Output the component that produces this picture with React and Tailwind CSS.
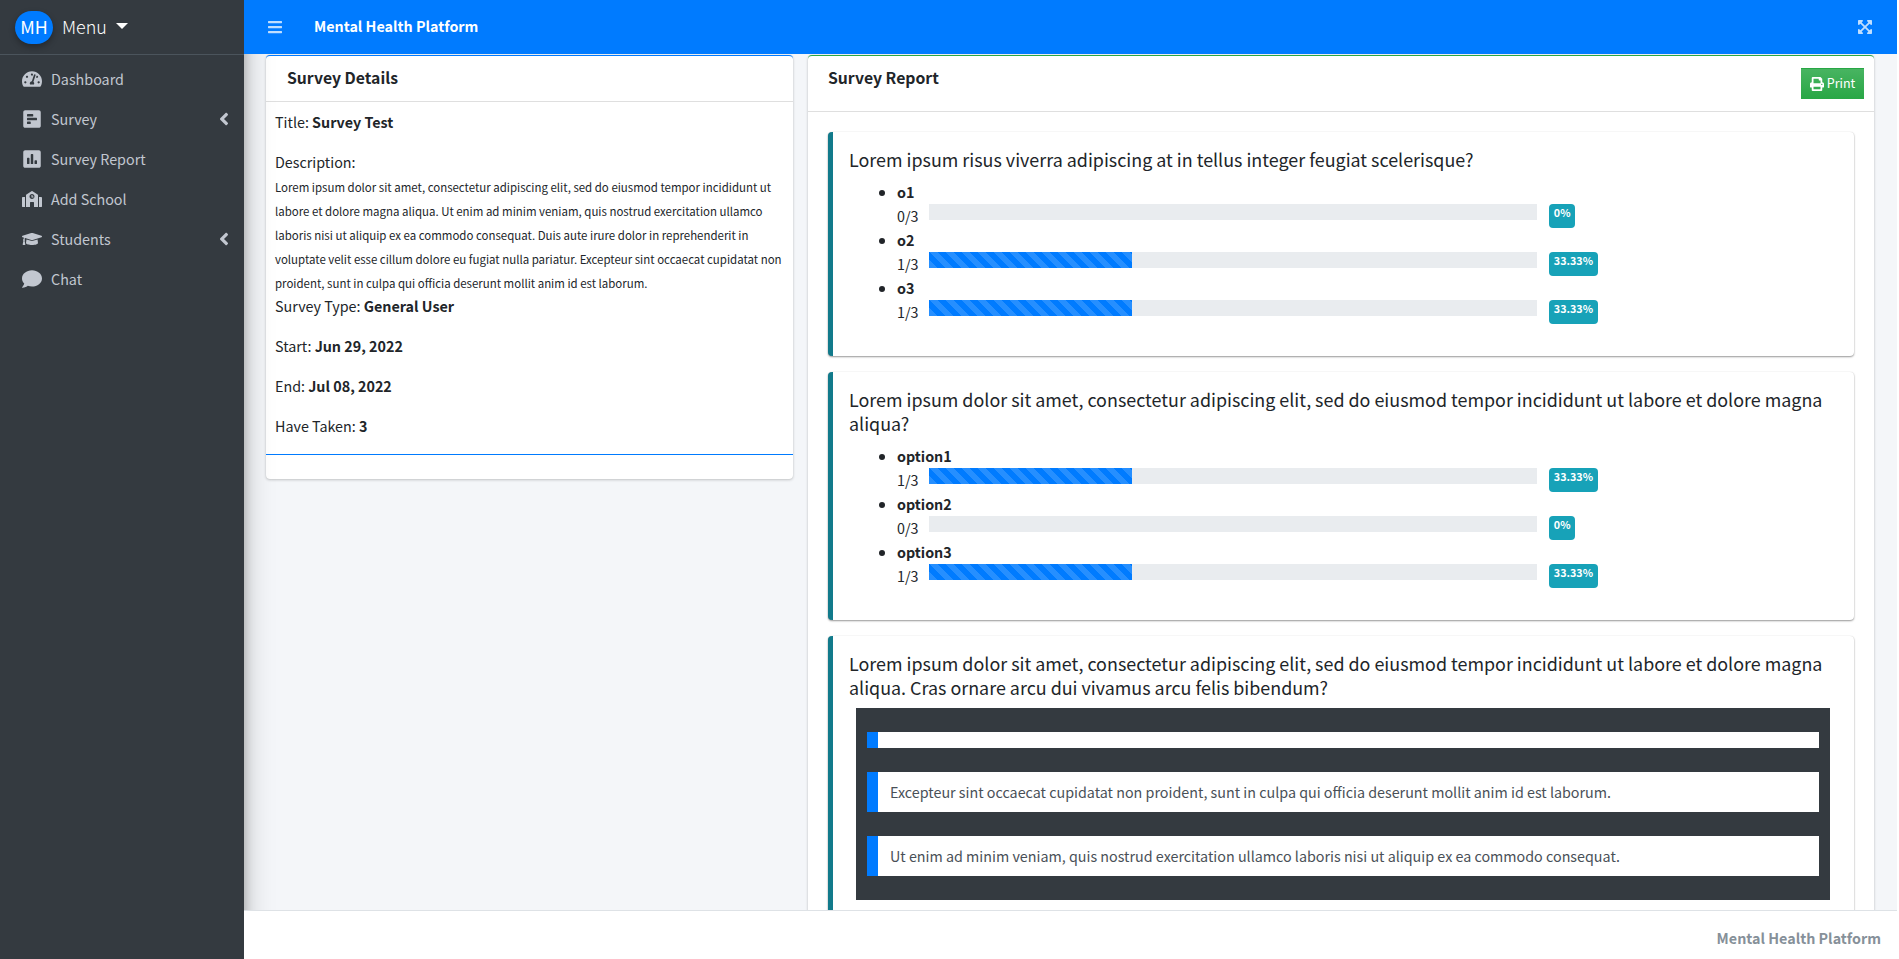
import {
  FaTachometerAlt, FaPollH, FaPoll, FaSchool, FaGraduationCap, FaComment,
  FaAngleLeft, FaBars, FaExpandArrowsAlt, FaPrint,
} from 'react-icons/fa';

const nav = [
  { label: 'Dashboard', icon: FaTachometerAlt },
  { label: 'Survey', icon: FaPollH, arrow: true },
  { label: 'Survey Report', icon: FaPoll },
  { label: 'Add School', icon: FaSchool },
  { label: 'Students', icon: FaGraduationCap, arrow: true },
  { label: 'Chat', icon: FaComment },
];

const lorem = 'Lorem ipsum dolor sit amet, consectetur adipiscing elit, sed do eiusmod tempor incididunt ut labore et dolore magna aliqua.';

const questions = [
  {
    q: 'Lorem ipsum risus viverra adipiscing at in tellus integer feugiat scelerisque?',
    options: [
      { name: 'o1', count: '0/3', pct: 0 },
      { name: 'o2', count: '1/3', pct: 33.33 },
      { name: 'o3', count: '1/3', pct: 33.33 },
    ],
  },
  {
    q: lorem.slice(0, -1) + '?',
    options: [
      { name: 'option1', count: '1/3', pct: 33.33 },
      { name: 'option2', count: '0/3', pct: 0 },
      { name: 'option3', count: '1/3', pct: 33.33 },
    ],
  },
];

const Sidebar = () => (
  <aside className="relative z-10 w-[244px] shrink-0 bg-[#343a40] shadow-[0_14px_28px_rgba(0,0,0,0.25),0_10px_10px_rgba(0,0,0,0.22)]">
    <div className="flex h-[55px] items-center border-b border-[#4b545c] pl-[15px]">
      <div className="flex h-[33px] w-[38px] items-center justify-center rounded-full bg-[#007bff] pb-[2px] text-[17.9px] text-white shadow-[0_3px_6px_rgba(0,0,0,0.3)]">MH</div>
      <span className="ml-[9px] pb-[2px] text-[17.9px] font-light text-white">Menu</span>
      <span className="mb-[3px] ml-[9px] h-0 w-0 border-x-[6px] border-t-[6px] border-x-transparent border-t-white" />
    </div>
    <nav className="mt-1">
      {nav.map(({ label, icon: Icon, arrow }) => (
        <div key={label} className="flex h-10 items-center text-[14.32px] text-[#c2c7d0]">
          <span className="flex w-[51px] shrink-0 justify-center pl-[13px]">
            <Icon className="text-[20px]" />
          </span>
          <span>{label}</span>
          {arrow && <FaAngleLeft className="ml-auto mr-[10px] text-[20px]" />}
        </div>
      ))}
    </nav>
  </aside>
);

const Question = ({ q, options }) => (
  <div className="rounded border-l-[5px] border-[#117a8b] bg-white px-4 pb-4 pt-[15px] shadow-[0_0_1px_rgba(0,0,0,0.125),0_1px_2px_rgba(0,0,0,0.4)]">
    <div className="mb-[9px] text-[17.9px] leading-[24px] text-[#212529]">{q}</div>
    <ul className="mb-4 list-disc pl-[48px]">
      {options.map((o) => (
        <li key={o.name}>
          <b className="block h-6 font-bold">{o.name}</b>
          <div className="flex">
            <span className="h-6 w-8 shrink-0 leading-[23px]">{o.count}</span>
            <div className="h-4 w-[608px] shrink-0 bg-[#e9ecef]">
              <div
                className="h-full bg-[#007bff] bg-[linear-gradient(45deg,rgba(255,255,255,.15)_25%,transparent_25%,transparent_50%,rgba(255,255,255,.15)_50%,rgba(255,255,255,.15)_75%,transparent_75%,transparent)] bg-[length:16px_16px]"
                style={{ width: `${o.pct}%` }}
              />
            </div>
            <span className="ml-3 h-6 rounded bg-[#17a2b8] px-[4.8px] pt-[3px] text-[10.74px] font-bold leading-[12px] text-white">{o.pct}%</span>
          </div>
        </li>
      ))}
    </ul>
  </div>
);

const Answer = ({ children }) => (
  <div className="min-h-4 border-l-[11px] border-[#007bff] bg-white px-3 py-2 text-[#495057]">{children}</div>
);

export default function App() {
  return (
    <div className="flex h-screen overflow-hidden bg-white pr-0.5 text-[14.32px] leading-[24px] text-[#212529] [font-family:'Noto_Sans_CJK_SC','Source_Sans_Pro',sans-serif]">
      <Sidebar />
      <div className="flex min-w-0 flex-1 flex-col">
        <header className="relative z-20 flex h-[54px] shrink-0 items-center bg-[#007bff] pl-[23px] pr-6 text-white">
          <FaBars className="text-[16px] text-white/75" />
          <span className="ml-[31px] pb-[2px] font-bold">Mental Health Platform</span>
          <FaExpandArrowsAlt className="ml-auto text-[16px] text-white/75" />
        </header>

        <main className="flex min-h-0 flex-1 items-start gap-[15px] overflow-hidden bg-[#f4f6f9] pl-[22px] pr-[23px] pt-px">
          <section className="w-[527px] shrink-0 rounded border-t border-[#007bff] bg-white shadow-[0_0_1px_rgba(0,0,0,0.125),0_1px_3px_rgba(0,0,0,0.2)]">
            <div className="h-[46px] border-b border-[#dfdfdf] pl-[21px] pt-[10px] text-[15.75px] font-bold">Survey Details</div>
            <div className="pl-[9px] pr-[7px] pt-2">
              <p className="mb-4">Title: <b>Survey Test</b></p>
              <p className="pb-px">Description:</p>
              <p className="-mb-px text-[11.46px]">
                {lorem} Ut enim ad minim veniam, quis nostrud exercitation ullamco laboris nisi ut aliquip ex ea commodo consequat. Duis aute irure dolor in reprehenderit in voluptate velit esse cillum dolore eu fugiat nulla pariatur. Excepteur sint occaecat cupidatat non proident, sunt in culpa qui officia deserunt mollit anim id est laborum.
              </p>
              <p className="mb-4">Survey Type: <b>General User</b></p>
              <p className="mb-4">Start: <b>Jun 29, 2022</b></p>
              <p className="mb-4">End: <b>Jul 08, 2022</b></p>
              <p className="mb-4">Have Taken: <b>3</b></p>
            </div>
            <div className="h-[25px] border-t border-[#007bff]" />
          </section>

          <section className="min-w-0 flex-1 rounded border-t border-[#28a745] bg-white shadow-[0_0_1px_rgba(0,0,0,0.125),0_1px_3px_rgba(0,0,0,0.2)]">
            <div className="flex h-[56px] items-start justify-between border-b border-[#dfdfdf] pl-5 pr-[10px] pt-[10px]">
              <span className="text-[15.75px] font-bold">Survey Report</span>
              <button className="mt-[2px] flex h-[31px] w-[63px] items-center justify-center gap-[3px] border-t border-[#28a745] bg-[#28a745] bg-[linear-gradient(180deg,#48b461,#28a745)] pb-[2px] text-[12.53px] text-white">
                <FaPrint className="mt-[2px] text-[14px]" />Print
              </button>
            </div>
            <div className="flex flex-col gap-4 px-5 pb-6 pt-[20px]">
              {questions.map((q) => (
                <Question key={q.q} {...q} />
              ))}
              <div className="rounded border-l-[5px] border-[#117a8b] bg-white px-4 pb-8 pt-[15px] shadow-[0_0_1px_rgba(0,0,0,0.125),0_1px_2px_rgba(0,0,0,0.4)]">
                <div className="mb-[9px] text-[17.9px] leading-[24px]">{lorem} Cras ornare arcu dui vivamus arcu felis bibendum?</div>
                <div className="ml-[7px] mr-2 flex flex-col gap-6 bg-[#343a40] px-[11px] py-6">
                  <Answer />
                  <Answer>Excepteur sint occaecat cupidatat non proident, sunt in culpa qui officia deserunt mollit anim id est laborum.</Answer>
                  <Answer>Ut enim ad minim veniam, quis nostrud exercitation ullamco laboris nisi ut aliquip ex ea commodo consequat.</Answer>
                </div>
              </div>
            </div>
          </section>
        </main>

        <footer className="relative z-20 h-[49px] shrink-0 border-t border-[#dee2e6] bg-white pr-4 pt-[15px] text-right font-bold text-[#869099]">
          Mental Health Platform
        </footer>
      </div>
    </div>
  );
}
